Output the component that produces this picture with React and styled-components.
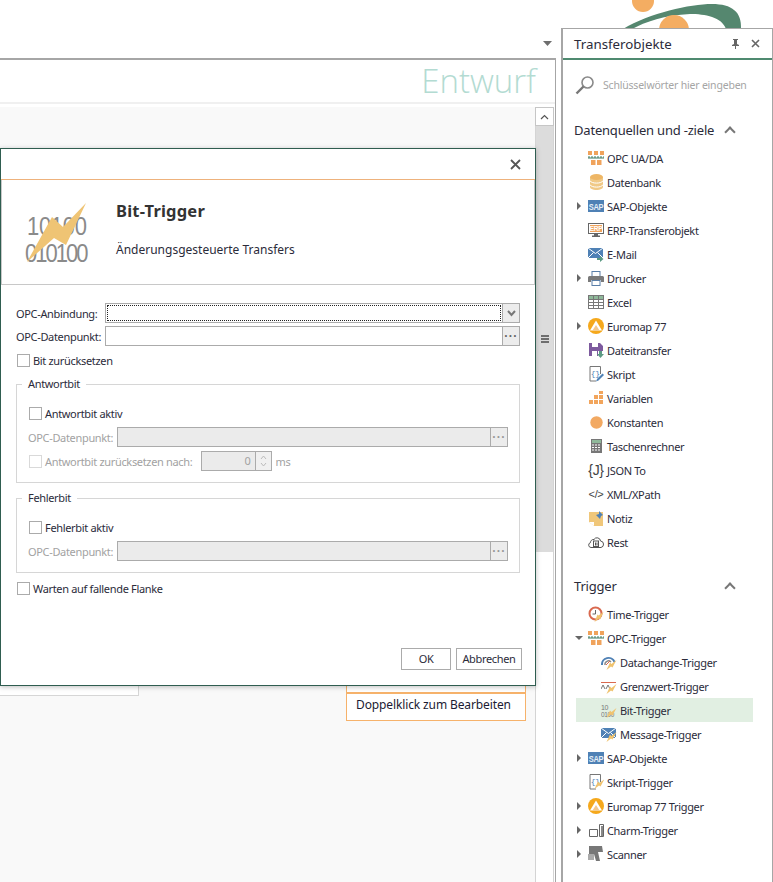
import React from 'react'
import styled, { createGlobalStyle } from 'styled-components'

const GlobalStyle = createGlobalStyle`
  html, body { margin: 0; padding: 0; background: #fff; }
  body { font-family: "Noto Sans", "Open Sans", sans-serif; color: #2b2b3a; }
`

/* ---------- icons ---------- */

const OpcIcon = () => (
  <svg width="16" height="14" viewBox="0 0 16 14">
    <g fill="#f0a35c">
      <rect x="0" y="0" width="4" height="4" /><rect x="6" y="0" width="4" height="4" /><rect x="12" y="0" width="4" height="4" />
      <rect x="3" y="9" width="4.500" height="5" /><rect x="9" y="9" width="4.500" height="5" />
    </g>
    <path d="M0 6h16" stroke="#3f7a63" strokeWidth="1" strokeDasharray="2 1" />
    <path d="M0 7h16" stroke="#3f7a63" strokeWidth="1" />
  </svg>
)
const DbIcon = () => (
  <svg width="15" height="16" viewBox="0 0 15 16">
    <path d="M1 3v10c0 1.600 2.900 3 6.500 3s6.500-1.400 6.500-3V3z" fill="#f0c987" />
    <ellipse cx="7.500" cy="3" rx="6.500" ry="3" fill="#eeb665" />
    <path d="M1 6.800c1 1.500 3.400 2.300 6.500 2.300s5.500-.8 6.500-2.300M1 10.800c1 1.500 3.400 2.300 6.500 2.300s5.500-.8 6.500-2.300" fill="none" stroke="#fff" />
  </svg>
)
const SapIcon = () => (
  <svg width="16" height="12" viewBox="0 0 16 12">
    <rect width="16" height="12" fill="#4f81b5" />
    <text x="8" y="7.700" textAnchor="middle" transform="scale(1 1.250)" fontSize="7.500" fontWeight="700" fill="#e6eef6" fontFamily="Liberation Sans, sans-serif">SAP</text>
  </svg>
)
const ErpIcon = () => (
  <svg width="16" height="14" viewBox="0 0 16 14">
    <rect x="0.500" y="0.500" width="15" height="10" fill="#fff" stroke="#666" />
    <rect x="2" y="2" width="12" height="7" fill="#f0a35c" />
    <text x="8" y="8.300" textAnchor="middle" fontSize="6.500" fontWeight="700" fill="#fff" fontFamily="Liberation Sans, sans-serif">ERP</text>
    <path d="M6 11h4v1.500H6zM4 12.500h8V14H4z" fill="#666" />
  </svg>
)
const Bolt = () => <path d="M15.500 5L10.500 9 9 7.500 5.500 15l4.500-3.500 1.500 1z" fill="#f0c36f" />
const MailIcon = ({ bolt }) => (
  <svg width="16" height="15" viewBox="0 0 16 15">
    <rect y="1" width="15" height="10" fill="#4f81b5" />
    <path d="M0 1l7.500 5.500L15 1M0 11l5.500-5.500M15 11L9.500 5.500" fill="none" stroke="#fff" />
    {bolt ? <Bolt /> : <path d="M9 11h3V9l3.500 3-3.500 3v-2H9z" fill="#5c9a84" />}
  </svg>
)
const PrinterIcon = () => (
  <svg width="16" height="15" viewBox="0 0 16 15">
    <rect x="4" y="0.500" width="8" height="5" fill="#fff" stroke="#5a7fa8" />
    <path d="M1.500 5h13A1.500 1.500 0 0 1 16 6.500V11h-3V9H3v2H0V6.500A1.500 1.500 0 0 1 1.500 5z" fill="#7a7a7a" />
    <rect x="4" y="9.500" width="8" height="5" fill="#fff" stroke="#5a7fa8" />
  </svg>
)
const ExcelIcon = () => (
  <svg width="16" height="14" viewBox="0 0 16 14">
    <rect x="0.500" y="0.500" width="15" height="13" fill="#fff" stroke="#777" />
    <rect x="1" y="1" width="14" height="3.500" fill="#8fb99a" />
    <path d="M5.500 1v13M10.500 1v13M1 4.500h14M1 7.500h14M1 10.500h14" stroke="#777" fill="none" />
  </svg>
)
const EuromapIcon = () => (
  <svg width="16" height="16" viewBox="0 0 16 16">
    <circle cx="8" cy="8" r="8" fill="#f5a81c" />
    <path d="M8 2.500L14 12.500H2z" fill="#fff" />
    <path d="M8 7l3.500 5.500h-7z" fill="#f2c78e" />
  </svg>
)
const FileIcon = () => (
  <svg width="15" height="15" viewBox="0 0 15 15">
    <path d="M0 0h11l3 3v5H9v5H0z" fill="#7d5a9e" />
    <rect x="3" y="0" width="6" height="4" fill="#fff" />
    <rect x="3" y="8" width="5" height="6" fill="#fff" />
    <path d="M10 8h3v3h2l-3.500 4L8 11h2z" fill="#5c9a84" />
  </svg>
)
const ScriptIcon = ({ bolt }) => (
  <svg width="15" height="16" viewBox="0 0 15 16">
    <path d="M11.500 8V.5H1V15h6" fill="none" stroke="#777" />
    <text x="6.200" y="10" textAnchor="middle" fontSize="8" fill="#4f81b5" fontFamily="Liberation Mono, monospace">{'{}'}</text>
    {bolt ? <Bolt /> : <path d="M13.500 7.500l1.500 1.500-5.500 5.500-2.500 1 1-2.500z" fill="#4f81b5" />}
  </svg>
)
const VarIcon = () => (
  <svg width="15" height="14" viewBox="0 0 15 14" fill="#f2a55c">
    <rect x="10" y="0" width="4" height="3" /><rect x="10" y="4" width="4" height="4" /><rect x="5" y="4" width="4" height="4" />
    <rect x="10" y="9" width="4" height="4" /><rect x="5" y="9" width="4" height="4" /><rect x="0" y="9" width="4" height="4" />
  </svg>
)
const ConstIcon = () => <svg width="13" height="13" viewBox="0 0 13 13"><circle cx="6.500" cy="6.500" r="6.200" fill="#f2a962" /></svg>
const CalcIcon = () => (
  <svg width="11" height="14" viewBox="0 0 11 14">
    <rect width="11" height="14" fill="#777" />
    <rect x="1" y="1" width="9" height="3" fill="#8fb99a" />
    <path d="M1 6h9M1 8.500h9M1 11h9" stroke="#fff" strokeDasharray="2 1" />
  </svg>
)
const RestIcon = () => (
  <svg width="16" height="12" viewBox="0 0 16 12">
    <path d="M4 11.500H3A2.500 2.500 0 0 1 2.500 6.600 3 3 0 0 1 6 3.500 3.500 3.500 0 0 1 12.500 5a3.300 3.300 0 0 1 .5 6.500z" fill="none" stroke="#555" />
    <rect x="5.500" y="5" width="5" height="5.500" fill="none" stroke="#555" />
    <path d="M7.500 6.500v3M9 6.500v3" stroke="#555" />
  </svg>
)
const NoteIcon = () => (
  <svg width="15" height="15" viewBox="0 0 15 15">
    <path d="M0 1h14v14H5l-5-4z" fill="#f0c77a" />
    <path d="M0 11h5v4z" fill="#fff" />
    <path d="M10 0l4 4-2 1-1 3-4-4 3-1z" fill="#4f81b5" />
  </svg>
)
const TimeIcon = () => (
  <svg width="16" height="16" viewBox="0 0 16 16">
    <circle cx="7.500" cy="7.500" r="6" fill="#fff" stroke="#d9694f" strokeWidth="2" />
    <path d="M7.500 4v4H4.500" fill="none" stroke="#666" />
    <path d="M15.500 6l-5 3.500-1-1L6.500 16l4.500-3.500 1 1z" fill="#f0c36f" />
  </svg>
)
const DatachangeIcon = () => (
  <svg width="16" height="15" viewBox="0 0 16 15">
    <path d="M1 10A6.500 6.500 0 0 1 13.500 7" fill="none" stroke="#4f81b5" strokeWidth="2" />
    <path d="M4 10A3.500 3.500 0 0 1 10 7" fill="none" stroke="#888" strokeWidth="1.400" />
    <path d="M5 10l4-4" stroke="#d9694f" />
    <Bolt />
  </svg>
)
const LimitIcon = () => (
  <svg width="16" height="15" viewBox="0 0 16 15">
    <path d="M0 3.500h15" stroke="#d9694f" />
    <path d="M0 10l2-4 2 4M5 10l2-4 2 4" fill="none" stroke="#777" />
    <Bolt />
  </svg>
)
const BitIcon = () => (
  <svg width="16" height="15" viewBox="0 0 16 15">
    <text x="0" y="6.500" fontSize="7" fill="#777" fontFamily="Liberation Sans, sans-serif">10</text>
    <text x="0" y="14" fontSize="6.500" fill="#777" fontFamily="Liberation Sans, sans-serif">0100</text>
    <Bolt />
  </svg>
)
const CharmIcon = () => (
  <svg width="15" height="13" viewBox="0 0 15 13">
    <path d="M.5 5.500h8v7h-8zM10.500 .5h4v12h-4z" fill="none" stroke="#666" />
    <rect x="12" y="2" width="2" height="10" fill="#888" />
  </svg>
)
const ScannerIcon = () => (
  <svg width="16" height="16" viewBox="0 0 16 16" fill="#777">
    <path d="M1 0h13l1 6h-5l2 9H8L6 8H1z" />
    <rect x="0" y="8" width="6" height="6" fill="#aaa" />
  </svg>
)

const IconText = styled.span`
  font-family: "Liberation Sans", sans-serif;
  font-size: ${(p) => p.$size}px;
  line-height: 1;
  color: #444;
  white-space: nowrap;
`

/* ---------- panel data ---------- */

const sources = [
  { label: 'OPC UA/DA', icon: <OpcIcon /> },
  { label: 'Datenbank', icon: <DbIcon /> },
  { label: 'SAP-Objekte', icon: <SapIcon />, arrow: 'right' },
  { label: 'ERP-Transferobjekt', icon: <ErpIcon /> },
  { label: 'E-Mail', icon: <MailIcon /> },
  { label: 'Drucker', icon: <PrinterIcon />, arrow: 'right' },
  { label: 'Excel', icon: <ExcelIcon /> },
  { label: 'Euromap 77', icon: <EuromapIcon />, arrow: 'right' },
  { label: 'Dateitransfer', icon: <FileIcon /> },
  { label: 'Skript', icon: <ScriptIcon /> },
  { label: 'Variablen', icon: <VarIcon /> },
  { label: 'Konstanten', icon: <ConstIcon /> },
  { label: 'Taschenrechner', icon: <CalcIcon /> },
  { label: 'JSON To', icon: <IconText $size={14}>{'{J}'}</IconText> },
  { label: 'XML/XPath', icon: <IconText $size={11}>{'</>'}</IconText> },
  { label: 'Notiz', icon: <NoteIcon /> },
  { label: 'Rest', icon: <RestIcon /> },
]

const triggers = [
  { label: 'Time-Trigger', icon: <TimeIcon /> },
  { label: 'OPC-Trigger', icon: <OpcIcon />, arrow: 'down' },
  { label: 'Datachange-Trigger', icon: <DatachangeIcon />, child: true },
  { label: 'Grenzwert-Trigger', icon: <LimitIcon />, child: true },
  { label: 'Bit-Trigger', icon: <BitIcon />, child: true, active: true },
  { label: 'Message-Trigger', icon: <MailIcon bolt />, child: true },
  { label: 'SAP-Objekte', icon: <SapIcon />, arrow: 'right' },
  { label: 'Skript-Trigger', icon: <ScriptIcon bolt /> },
  { label: 'Euromap 77 Trigger', icon: <EuromapIcon />, arrow: 'right' },
  { label: 'Charm-Trigger', icon: <CharmIcon />, arrow: 'right' },
  { label: 'Scanner', icon: <ScannerIcon />, arrow: 'right' },
]

/* ---------- main ---------- */

function TreeRow({ item }) {
  return (
    <Row $child={item.child} $active={item.active}>
      <ArrowSlot>{item.arrow && <Arrow $dir={item.arrow} />}</ArrowSlot>
      <RowIcon>{item.icon}</RowIcon>
      <span>{item.label}</span>
    </Row>
  )
}

function Field({ label, disabled, button, focused, indent }) {
  return (
    <FieldRow $indent={indent} $focused={focused}>
      <FieldLabel $disabled={disabled}>{label}</FieldLabel>
      <InputBox $disabled={disabled}>
        <InputInner>{focused && <FocusRing />}</InputInner>
        <SideButton $disabled={disabled}>
          {button === 'dots' ? <Dots $disabled={disabled}>···</Dots> : (
            <svg width="9" height="7" viewBox="0 0 9 7"><path d="M1 1l3.500 4L8 1" fill="none" stroke="#777" strokeWidth="2" /></svg>
          )}
        </SideButton>
      </InputBox>
    </FieldRow>
  )
}

function Check({ label, disabled, indent, spaced }) {
  return (
    <CheckRow $indent={indent} $spaced={spaced}>
      <CheckBox $disabled={disabled} />
      <CheckLabel $disabled={disabled}>{label}</CheckLabel>
    </CheckRow>
  )
}

export default function App() {
  return (
    <>
      <GlobalStyle />
      <Page>
        <Workspace>
          <TopBar>
            <svg width="9" height="5" viewBox="0 0 9 5"><path d="M0 0h9L4.500 5z" fill="#6e6e6e" /></svg>
          </TopBar>
          <Document>
            <Status>Entwurf</Status>
            <Canvas>
              <CanvasArea>
                <LeftCard />
                <OrangeStack>
                  <OrangeSliver />
                  <OrangeNote>Doppelklick zum Bearbeiten</OrangeNote>
                </OrangeStack>
              </CanvasArea>
              <ScrollBar>
                <ScrollUp>
                  <svg width="9" height="6" viewBox="0 0 9 6"><path d="M1 5l3.500-3.500L8 5" fill="none" stroke="#555" strokeWidth="1.200" /></svg>
                </ScrollUp>
                <ScrollThumb><Grip /></ScrollThumb>
              </ScrollBar>
            </Canvas>
          </Document>
        </Workspace>

        <Side>
          <LogoArt width="190" height="29" viewBox="0 0 190 29">
            <circle cx="83" cy="1" r="11" fill="#f4ad62" />
            <path d="M63 29C90 13 130 4 152 4c20 0 30 8 29 25H166c-4-12-21-15-36-15-25 1-45 8-58 15z" fill="#55876f" />
            <circle cx="114" cy="30" r="15" fill="#f4ad62" />
          </LogoArt>
          <Panel>
            <PanelHead>
              <PanelTitle>Transferobjekte</PanelTitle>
              <PanelTools>
                <svg width="9" height="10" viewBox="0 0 9 10"><path d="M2 0h5v1H6v4l2 1v1H5v3H4V7H1V6l2-1V1H2z" fill="#666" /></svg>
                <svg width="9" height="9" viewBox="0 0 9 9"><path d="M1 1l7 7M8 1L1 8" stroke="#666" strokeWidth="1.600" /></svg>
              </PanelTools>
            </PanelHead>
            <Search>
              <svg width="20" height="20" viewBox="0 0 20 20">
                <circle cx="12.500" cy="7.500" r="5.500" fill="none" stroke="#8a8a8a" strokeWidth="1.600" />
                <path d="M8.500 11.500L1.500 18.500" stroke="#777" strokeWidth="2.400" />
              </svg>
              <span>Schlüsselwörter hier eingeben</span>
            </Search>
            <GroupHead>
              <GroupTitle>Datenquellen und -ziele</GroupTitle>
              <Caret />
            </GroupHead>
            <Tree>{sources.map((s) => <TreeRow key={s.label} item={s} />)}</Tree>
            <GroupHead $second>
              <GroupTitle>Trigger</GroupTitle>
              <Caret />
            </GroupHead>
            <Tree>{triggers.map((s) => <TreeRow key={s.label} item={s} />)}</Tree>
          </Panel>
        </Side>

        <Dialog>
          <DialogTitleBar>
            <svg width="11" height="11" viewBox="0 0 11 11"><path d="M1 1l9 9M10 1l-9 9" stroke="#555" strokeWidth="1.800" /></svg>
          </DialogTitleBar>
          <Banner>
            <BannerArt>
              <BinaryLine $top>10100</BinaryLine>
              <BinaryLine $tight>010100</BinaryLine>
              <BoltArt width="62" height="60" viewBox="25 203 62 60">
                <path d="M86 203L63 227 52 217 27 262 54 238 66 245z" fill="#efc474" />
              </BoltArt>
            </BannerArt>
            <BannerText>
              <BannerTitle>Bit-Trigger</BannerTitle>
              <BannerSub>Änderungsgesteuerte Transfers</BannerSub>
            </BannerText>
          </Banner>
          <Form>
            <Field label="OPC-Anbindung:" button="chevron" focused />
            <Field label="OPC-Datenpunkt:" button="dots" />
            <Check label="Bit zurücksetzen" />
            <Fieldset $h={99}>
              <Legend>Antwortbit</Legend>
              <Check label="Antwortbit aktiv" indent spaced />
              <Field label="OPC-Datenpunkt:" button="dots" disabled indent />
              <DelayRow>
                <Check label="Antwortbit zurücksetzen nach:" disabled indent />
                <Spinner>
                  <SpinValue>0</SpinValue>
                  <SpinButtons>
                    <svg width="7" height="5" viewBox="0 0 7 5"><path d="M1 4l2.500-3L6 4" fill="none" stroke="#bbb" /></svg>
                    <svg width="7" height="5" viewBox="0 0 7 5"><path d="M1 1l2.500 3L6 1" fill="none" stroke="#bbb" /></svg>
                  </SpinButtons>
                </Spinner>
                <Unit>ms</Unit>
              </DelayRow>
            </Fieldset>
            <Fieldset $h={75} $last>
              <Legend>Fehlerbit</Legend>
              <Check label="Fehlerbit aktiv" indent spaced />
              <Field label="OPC-Datenpunkt:" button="dots" disabled indent />
            </Fieldset>
            <Check label="Warten auf fallende Flanke" />
          </Form>
          <DialogButtons>
            <DlgButton $w={50}>OK</DlgButton>
            <DlgButton $w={66}>Abbrechen</DlgButton>
          </DialogButtons>
        </Dialog>
      </Page>
    </>
  )
}

const Page = styled.div`
  position: relative;
  display: flex;
  width: 773px;
  height: 882px;
  overflow: hidden;
  background: #fff;
`

const Workspace = styled.div`
  display: flex;
  flex-direction: column;
  width: 556px;
  flex: none;
`

const TopBar = styled.div`
  height: 58px;
  flex: none;
  display: flex;
  justify-content: flex-end;
  align-items: flex-start;
  padding: 41px 4px 0 0;
  box-sizing: border-box;
`

const Document = styled.div`
  flex: 1;
  display: flex;
  flex-direction: column;
  border-top: 2px solid #a6a6a6;
  border-right: 1px solid #a6a6a6;
  min-height: 0;
`

const Status = styled.div`
  height: 42px;
  flex: none;
  padding-right: 19px;
  text-align: right;
  font-family: "Open Sans", sans-serif;
  font-size: 33px;
  font-weight: 300;
  line-height: 42px;
  color: #b3dbd2;
  border-bottom: 2px solid #f0f0f0;
`

const Canvas = styled.div`
  flex: 1;
  display: flex;
  min-height: 0;
  padding-top: 3px;
  background: #fff;
`

const CanvasArea = styled.div`
  position: relative;
  flex: 1;
  background: #f9f9f9;
`

const LeftCard = styled.div`
  position: absolute;
  left: 0;
  top: 560px;
  width: 138px;
  height: 27px;
  background: #fff;
  border: 1px solid #d6d6d6;
  border-left: 0;
`

const OrangeStack = styled.div`
  position: absolute;
  left: 346px;
  top: 560px;
  width: 180px;
`

const OrangeSliver = styled.div`
  height: 26px;
  background: #fff;
  border: 1px solid #f6b26b;
  box-sizing: border-box;
`

const OrangeNote = styled.div`
  height: 28px;
  box-sizing: border-box;
  background: #fff;
  border: 1px solid #f6b26b;
  padding-left: 9px;
  font-size: 12px;
  letter-spacing: -0.12px;
  line-height: 22px;
  color: #1b1b33;
`

const ScrollBar = styled.div`
  width: 17px;
  flex: none;
  margin: 0 1px 0 0;
  border-left: 1px solid #d4d4d4;
  border-right: 1px solid #d4d4d4;
  display: flex;
  flex-direction: column;
`

const ScrollUp = styled.div`
  height: 17px;
  flex: none;
  display: flex;
  align-items: center;
  justify-content: center;
  border: 1px solid #c6c6c6;
  margin: 0 -1px;
  background: #fff;
`

const ScrollThumb = styled.div`
  height: 426px;
  flex: none;
  background: #dcdcdc;
  display: flex;
  align-items: center;
  justify-content: center;
`

const Grip = styled.div`
  width: 8px;
  height: 8px;
  border-top: 2px solid #6e6e6e;
  border-bottom: 2px solid #6e6e6e;
  background: linear-gradient(#6e6e6e, #6e6e6e) center / 100% 2px no-repeat;
  box-sizing: border-box;
`

const Side = styled.div`
  position: relative;
  flex: 1;
  padding: 28px 0 0 5px;
  min-width: 0;
  display: flex;
`

const LogoArt = styled.svg`
  position: absolute;
  left: 4px;
  top: 0;
`

const Panel = styled.div`
  position: relative;
  flex: 1;
  background: #fff;
  border-left: 2px solid #a6a6a6;
  border-top: 1px solid #a6a6a6;
  border-right: 1px solid #a6a6a6;
  min-width: 0;
`

const PanelHead = styled.div`
  height: 29px;
  display: flex;
  align-items: center;
  justify-content: space-between;
  border-bottom: 2px solid #4f8a70;
  padding: 0 12px 0 11px;
`

const PanelTitle = styled.div`
  font-size: 13.300px;
  color: #2b2b3a;
`

const PanelTools = styled.div`
  display: flex;
  align-items: center;
  gap: 11px;
`

const Search = styled.div`
  display: flex;
  align-items: center;
  gap: 8px;
  height: 20px;
  margin-top: 15px;
  padding-left: 12px;
  font-size: 10.500px;
  letter-spacing: -0.2px;
  color: #a5a5a5;
`

const GroupHead = styled.div`
  display: flex;
  align-items: center;
  height: 20px;
  margin: ${(p) => (p.$second ? '22px 0 6px' : '25px 0 6px')};
  padding-left: 11px;
`

const GroupTitle = styled.div`
  width: 152px;
  flex: none;
  font-size: 13px;
  letter-spacing: -0.2px;
  color: #2b2b3a;
  white-space: nowrap;
`

const Caret = styled.div`
  width: 6px;
  height: 6px;
  border-left: 2px solid #777;
  border-top: 2px solid #777;
  transform: rotate(45deg);
  margin-top: 4px;
`

const Tree = styled.div`
  display: flex;
  flex-direction: column;
`

const Row = styled.div`
  height: 24px;
  display: flex;
  align-items: center;
  padding-left: 11px;
  margin-right: ${(p) => (p.$child ? '19px' : '0')};
  margin-left: ${(p) => (p.$child ? '13px' : '0')};
  background: ${(p) => (p.$active ? '#e1efe2' : 'transparent')};
  font-size: 11px;
  letter-spacing: -0.33px;
  color: #2b2b3a;
  white-space: nowrap;
`

const ArrowSlot = styled.div`
  width: 14px;
  flex: none;
  display: flex;
  align-items: center;
`

const Arrow = styled.div`
  width: 0;
  height: 0;
  ${(p) => (p.$dir === 'down'
    ? 'border-left: 4px solid transparent; border-right: 4px solid transparent; border-top: 4px solid #666; margin-left: 1px;'
    : 'border-top: 4px solid transparent; border-bottom: 4px solid transparent; border-left: 4px solid #666; margin-left: 3px;')}
`

const RowIcon = styled.div`
  width: 16px;
  margin: 0 3px 0 0;
  flex: none;
  display: flex;
  align-items: center;
  justify-content: center;
  svg { display: block; }
`

/* ---------- dialog ---------- */

const Dialog = styled.div`
  position: absolute;
  left: 0;
  top: 148px;
  width: 536px;
  height: 538px;
  box-sizing: border-box;
  background: #fff;
  border: 1px solid #2f5d50;
  box-shadow: 0 1px 5px rgba(0, 0, 0, 0.25);
  display: flex;
  flex-direction: column;
  font-size: 11px;
  letter-spacing: -0.33px;
`

const DialogTitleBar = styled.div`
  height: 30px;
  flex: none;
  display: flex;
  align-items: center;
  justify-content: flex-end;
  padding-right: 14px;
  border-bottom: 1px solid #eeb27c;
`

const Banner = styled.div`
  height: 104px;
  flex: none;
  display: flex;
  border-left: 1px solid #c8c8c8;
  border-right: 1px solid #c8c8c8;
  border-bottom: 1px solid #c8c8c8;
`

const BannerArt = styled.div`
  position: relative;
  width: 60px;
  height: 60px;
  margin: 23px 0 0 23px;
  padding-top: 10px;
  flex: none;
`

const BinaryLine = styled.div`
  font-family: "Liberation Sans", sans-serif;
  font-size: 22px;
  line-height: 27px;
  letter-spacing: ${(p) => (p.$tight ? '-2px' : '-0.3px')};
  padding-left: ${(p) => (p.$top ? '2px' : '0')};
  transform: scaleY(1.15);
  color: #8a8a8a;
  white-space: nowrap;
`

const BoltArt = styled.svg`
  position: absolute;
  left: 0;
  top: 0;
`

const BannerText = styled.div`
  margin-left: 31px;
  padding-top: 20px;
  letter-spacing: 0;
`

const BannerTitle = styled.div`
  font-size: 16.500px;
  font-weight: 700;
  letter-spacing: 0.2px;
  color: #333;
  line-height: 22px;
`

const BannerSub = styled.div`
  font-size: 12px;
  color: #2b2b3a;
  margin-top: 19px;
`

const Form = styled.div`
  display: flex;
  flex-direction: column;
  padding: 18px 15px 0 15px;
`

const FieldRow = styled.div`
  display: flex;
  align-items: center;
  height: 20px;
  margin-bottom: ${(p) => (p.$focused ? '3px' : '4px')};
  padding: ${(p) => (p.$indent ? '0 11px' : '0')};
`

const FieldLabel = styled.div`
  width: 89px;
  flex: none;
  color: ${(p) => (p.$disabled ? '#a2a2a2' : '#2b2b3a')};
  white-space: nowrap;
`

const InputBox = styled.div`
  flex: 1;
  height: 20px;
  box-sizing: border-box;
  display: flex;
  border: 1px solid #ababab;
  background: ${(p) => (p.$disabled ? '#ebebeb' : '#fff')};
`

const InputInner = styled.div`
  flex: 1;
  padding: 1px;
  display: flex;
`

const FocusRing = styled.div`
  flex: 1;
  border: 1px dotted #222;
`

const SideButton = styled.div`
  width: 16px;
  flex: none;
  border-left: 1px solid #ababab;
  background: #ececec;
  display: flex;
  align-items: center;
  justify-content: center;
`

const Dots = styled.span`
  font-family: "Liberation Sans", sans-serif;
  font-weight: 700;
  font-size: 12px;
  letter-spacing: 0.5px;
  color: ${(p) => (p.$disabled ? '#999' : '#666')};
  line-height: 1;
`

const CheckRow = styled.div`
  display: flex;
  align-items: center;
  height: 20px;
  padding-left: ${(p) => (p.$indent ? '12px' : '1px')};
  margin-bottom: ${(p) => (p.$spaced ? '4px' : '0')};
`

const CheckBox = styled.div`
  width: 13px;
  height: 13px;
  flex: none;
  box-sizing: border-box;
  border: 1px solid ${(p) => (p.$disabled ? '#d9d9d9' : '#ababab')};
  margin-right: 3px;
`

const CheckLabel = styled.div`
  color: ${(p) => (p.$disabled ? '#a2a2a2' : '#2b2b3a')};
  white-space: nowrap;
`

const Fieldset = styled.div`
  position: relative;
  height: ${(p) => p.$h}px;
  box-sizing: border-box;
  margin: 14px 0 ${(p) => (p.$last ? '5px' : '1px')} 0;
  width: 504px;
  border: 1px solid #d6d6d6;
  padding: 18px 0 0 0;
`

const Legend = styled.div`
  position: absolute;
  top: -8px;
  left: 5px;
  padding: 0 6px;
  background: #fff;
  line-height: 14px;
  color: #2b2b3a;
`

const DelayRow = styled.div`
  display: flex;
  align-items: center;
  height: 20px;
`

const Spinner = styled.div`
  display: flex;
  width: 71px;
  height: 20px;
  margin-left: 9px;
  box-sizing: border-box;
  border: 1px solid #ababab;
  background: #ebebeb;
`

const SpinValue = styled.div`
  flex: 1;
  text-align: right;
  padding-right: 5px;
  line-height: 17px;
  color: #a2a2a2;
`

const SpinButtons = styled.div`
  width: 15px;
  flex: none;
  border-left: 1px solid #ababab;
  display: flex;
  flex-direction: column;
  align-items: center;
  justify-content: center;
  gap: 2px;
  background: #f0f0f0;
`

const Unit = styled.div`
  margin-left: 3px;
  color: #a2a2a2;
`

const DialogButtons = styled.div`
  margin-top: auto;
  display: flex;
  justify-content: flex-end;
  gap: 5px;
  padding: 0 13px 15px 0;
`

const DlgButton = styled.div`
  width: ${(p) => p.$w}px;
  height: 22px;
  box-sizing: border-box;
  border: 1px solid #ababab;
  text-align: center;
  line-height: 20px;
  color: #2b2b3a;
`
